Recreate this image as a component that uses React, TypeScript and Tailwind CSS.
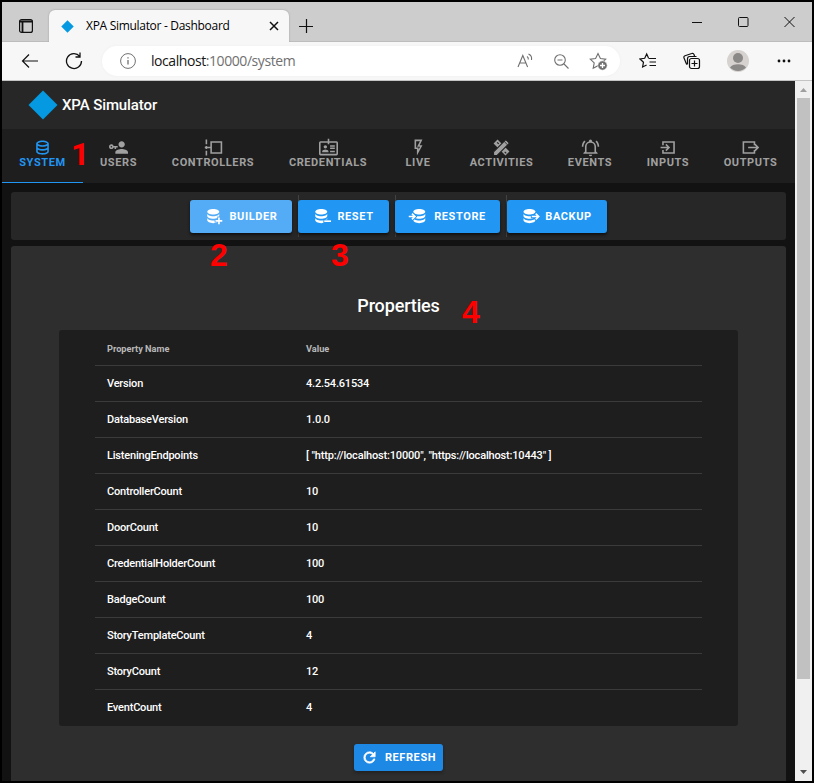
import type { ReactNode } from "react";

const Svg = ({ children, className = "" }: { children: ReactNode; className?: string }) => (
  <svg viewBox="0 0 24 24" fill="currentColor" className={"shrink-0 " + className}>
    {children}
  </svg>
);

const star = "M10 2.5l2.4 5 5.3.7-3.9 3.7 1 5.4-4.8-2.6-4.8 2.6 1-5.4-3.9-3.7 5.3-.7z";

const tabs: { label: string; width: string; icon: ReactNode }[] = [
  {
    label: "SYSTEM",
    width: "w-[81px]",
    icon: (
      <path d="M12 3C7.58 3 4 4.79 4 7V17C4 19.21 7.59 21 12 21S20 19.21 20 17V7C20 4.79 16.42 3 12 3M18 17C18 17.5 15.87 19 12 19S6 17.5 6 17V14.77C7.61 15.55 9.72 16 12 16S16.39 15.55 18 14.77V17M18 12.45C16.7 13.4 14.42 14 12 14C9.58 14 7.3 13.4 6 12.45V9.64C7.47 10.47 9.61 11 12 11C14.39 11 16.53 10.47 18 9.64V12.45M12 9C8.13 9 6 7.5 6 7S8.13 5 12 5C15.87 5 18 6.5 18 7S15.87 9 12 9Z" />
    ),
  },
  {
    label: "USERS",
    width: "w-[71px]",
    icon: (
      <path d="M11 10V12H9V14H7V12H5.8C5.4 13.2 4.3 14 3 14C1.3 14 0 12.7 0 11S1.3 8 3 8C4.3 8 5.4 8.8 5.8 10H11M3 10C2.4 10 2 10.4 2 11S2.4 12 3 12 4 11.6 4 11 3.6 10 3 10M16 14C18.7 14 24 15.3 24 18V20H8V18C8 15.3 13.3 14 16 14M16 12C13.8 12 12 10.2 12 8S13.8 4 16 4 20 5.8 20 8 18.2 12 16 12Z" />
    ),
  },
  {
    label: "CONTROLLERS",
    width: "w-[118px]",
    icon: <path d="M2 2h2v6H2zM2 10h2v1h4V4h15v16H8v-7H4v1H2v-1H1v-2h1zM2 16h2v6H2zM10 6v12h11V6z" />,
  },
  {
    label: "CREDENTIALS",
    width: "w-[112px]",
    icon: (
      <path d="M11 1h2v3h9a2 2 0 0 1 2 2v14a2 2 0 0 1-2 2H2a2 2 0 0 1-2-2V6a2 2 0 0 1 2-2h9zM2 6v14h20V6h-9v2h-2V6zM14 9h6v2h-6zM14 12h6v2h-6zM14 16h6v2h-6zM8 9a2.2 2.2 0 1 1 0 4.4A2.2 2.2 0 0 1 8 9M4 18v-1c0-1.5 2.7-2.4 4-2.4s4 .9 4 2.4v1z" />
    ),
  },
  {
    label: "LIVE",
    width: "w-[68px]",
    icon: <path d="M7 2H17L13.5 9H17L10 22V14H7V2M9 4V12H12V14.66L14 11H10.24L13.76 4H9Z" />,
  },
  {
    label: "ACTIVITIES",
    width: "w-[99px]",
    icon: (
      <>
        <path d="M2 7L7 2 22 17 17 22z" />
        <path d="M6.500 5.500l2 2M16 17.500l2 2" stroke="#1e1e1e" strokeWidth="1.500" />
        <path d="M2 22v-4.500L17.500 2l4.500 4.500L6.500 22z" stroke="#1e1e1e" strokeWidth="1.300" />
        <path d="M15.500 4.500l4 4" stroke="#1e1e1e" strokeWidth="1" />
      </>
    ),
  },
  {
    label: "EVENTS",
    width: "w-[78px]",
    icon: (
      <path d="M10,21H14A2,2 0 0,1 12,23A2,2 0 0,1 10,21M21,19V20H3V19L5,17V11C5,7.9 7.03,5.17 10,4.29C10,4.19 10,4.1 10,4A2,2 0 0,1 12,2A2,2 0 0,1 14,4C14,4.1 14,4.19 14,4.29C16.97,5.17 19,7.9 19,11V17L21,19M17,11A5,5 0 0,0 12,6A5,5 0 0,0 7,11V18H17V11M19.75,3.19L18.33,4.61C20.04,6.3 21,8.6 21,11H23C23,8.07 21.84,5.25 19.75,3.19M1,11H3C3,8.6 3.96,6.3 5.67,4.61L4.25,3.19C2.16,5.25 1,8.07 1,11Z" />
    ),
  },
  {
    label: "INPUTS",
    width: "w-[78px]",
    icon: <path d="M4 4h16v16H4v-5h2v3h12V6H6v3H4zM2 11h8.200L8 8.800l1.400-1.400L14 12l-4.600 4.600L8 15.200l2.200-2.200H2z" />,
  },
  {
    label: "OUTPUTS",
    width: "w-[87px]",
    icon: <path d="M2 4h16v5h-2V6H4v12h12v-3h2v5H2zM9 11h10.200L17 8.800l1.400-1.400L23 12l-4.600 4.600-1.400-1.400 2.200-2.200H9z" />,
  },
];

const Database = ({ x = 0 }: { x?: number }) => (
  <path
    transform={`translate(${x} 0)`}
    d="M11 2.500C6.600 2.500 3 4.200 3 6.200S6.600 9.900 11 9.900s8-1.700 8-3.700-3.600-3.700-8-3.700zM3 8.800c0 2 3.600 3.600 8 3.600s8-1.600 8-3.600v3.200c0 2-3.600 3.600-8 3.600S3 14 3 12zM3 14.300c0 2 3.600 3.600 8 3.600s8-1.600 8-3.600v3.500c0 2-3.600 3.700-8 3.700s-8-1.700-8-3.700z"
  />
);

// The overlay glyph carries an outline in its button's colour to cut it out of the discs.
const Overlay = ({ d, cut }: { d: string; cut: string }) => (
  <path d={d} stroke={cut} strokeWidth="2.400" paintOrder="stroke" />
);

const actions = [
  {
    label: "BUILDER",
    wrap: "ml-[179px]",
    cls: "w-[102px] gap-[6px] bg-[#55acf6] pl-px",
    icon: (
      <>
        <Database />
        <Overlay cut="#55acf6" d="M17.500 14h2.200v3.400H23v2.200h-3.300V23h-2.200v-3.400H14v-2.200h3.500z" />
      </>
    ),
  },
  {
    label: "RESET",
    wrap: "ml-[6px] border-l border-[#424242]",
    cls: "-ml-px w-[91px] gap-[6px] bg-[#2196f3]",
    icon: (
      <>
        <Database />
        <Overlay cut="#2196f3" d="M15 17.800h9v2.200h-9z" />
      </>
    ),
  },
  {
    label: "RESTORE",
    wrap: "ml-[6px] border-l border-[#424242]",
    cls: "-ml-px w-[105px] gap-[8px] bg-[#2196f3] pr-px",
    icon: (
      <>
        <Database x={4} />
        <Overlay cut="#2196f3" d="M1 11.500h5.500L4.500 9.500 6 8l4.800 4.600L6 17.200l-1.500-1.500 2-2H1z" />
      </>
    ),
  },
  {
    label: "BACKUP",
    wrap: "ml-[6px] border-l border-[#424242]",
    cls: "w-[100px] gap-[5px] bg-[#2196f3]",
    icon: (
      <>
        <Database x={-1} />
        <Overlay cut="#2196f3" d="M13 11.500h6.500L17.500 9.500 19 8l4.800 4.600L19 17.200l-1.500-1.500 2-2H13z" />
      </>
    ),
  },
];

const rows = [
  ["Version", "4.2.54.61534"],
  ["DatabaseVersion", "1.0.0"],
  ["ListeningEndpoints", '[ "http://localhost:10000", "https://localhost:10443" ]'],
  ["ControllerCount", "10"],
  ["DoorCount", "10"],
  ["CredentialHolderCount", "100"],
  ["BadgeCount", "100"],
  ["StoryTemplateCount", "4"],
  ["StoryCount", "12"],
  ["EventCount", "4"],
];

function TitleBar() {
  return (
    <div className="flex h-10 items-end border-b border-[#bdbdbd] bg-[#cdcdcd]">
      <div className="flex h-full w-[47px] items-center pl-[16px] pt-[8px]">
        <svg width="16" height="16" viewBox="0 0 16 16" fill="none" stroke="#111" strokeWidth="1.200">
          <rect x="1.600" y="1.600" width="12.800" height="12.800" rx="2" />
          <path d="M1.600 3.500h12.800M4.500 4v10" strokeWidth="1.800" />
        </svg>
      </div>
      <div className="-mb-px flex h-8 w-[240px] items-center rounded-t-md bg-[#f7f7f7] pl-[12px] shadow-[0_0_2px_#999]">
        <svg width="13" height="13" viewBox="0 0 14 14">
          <path d="M7 .3L13.700 7 7 13.700.3 7z" fill="#0499e0" />
        </svg>
        <span className="ml-[12px] w-[180px] whitespace-nowrap text-[12px] tracking-[-0.3px]">XPA Simulator - Dashboard</span>
        <svg width="10" height="10" viewBox="0 0 10 10" stroke="#111" strokeWidth="1.500" className="ml-[3px]">
          <path d="M1 1l8 8M9 1l-8 8" />
        </svg>
      </div>
      <svg width="14" height="14" viewBox="0 0 14 14" stroke="#111" strokeWidth="1.200" className="mb-[8px] ml-[10px]">
        <path d="M0 7.500h14M7.500 0v14" />
      </svg>
      <div className="mb-[13px] ml-auto mr-[17px] flex items-center gap-[35px]">
        <svg width="11" height="12" viewBox="0 0 11 12" stroke="#111">
          <path d="M0 6.500h10" />
        </svg>
        <svg width="11" height="12" viewBox="0 0 11 12" fill="none" stroke="#111">
          <rect x=".5" y="1.500" width="9.500" height="9" rx="1" />
        </svg>
        <svg width="11" height="12" viewBox="0 0 11 12" stroke="#111">
          <path d="M.5 1l10 10M10.500 1l-10 10" />
        </svg>
      </div>
    </div>
  );
}

function AddressBar() {
  return (
    <div className="flex h-[39px] items-center border-b border-[#c4c4c4] bg-[#f7f7f7] text-[#222]">
      <svg width="18" height="16" viewBox="0 0 18 16" fill="none" stroke="#111" strokeWidth="1.200" className="ml-[19px]">
        <path d="M17 8H1.500M8 1.500L1.500 8 8 14.500" />
      </svg>
      <svg width="18" height="18" viewBox="0 0 18 18" fill="none" stroke="#111" strokeWidth="1.300" className="ml-[26px]">
        <path d="M16.500 9A7.500 7.500 0 1 1 14.800 4.300M15 .5v4.500h-4.500" />
      </svg>
      <div className="ml-[19px] flex h-[30px] w-[518px] items-center rounded-full bg-white text-[#707070] shadow-[0_0_3px_#eee]">
        <svg width="16" height="16" viewBox="0 0 16 16" fill="none" stroke="currentColor" className="ml-[18px]">
          <circle cx="8" cy="8" r="7.400" />
          <path d="M8 7v4.500M8 4.300v1.300" strokeWidth="1.300" />
        </svg>
        <span className="ml-[15px] whitespace-nowrap text-[14px] leading-5 tracking-[-0.43px]">
          <span className="text-[#151515]">localhost</span>:10000/system
        </span>
        <div className="ml-auto mr-[12px] flex items-center gap-[19px]">
          <svg width="17" height="18" viewBox="0 0 17 18" fill="none" stroke="currentColor" strokeWidth="1.100">
            <path d="M1 15L5.800 3.500 10.600 15M2.600 11h6.400M10 4.500c1 .6 1.500 1.700 1.300 3M11.500 2c2.300 1 3.500 3.200 3 6" />
          </svg>
          <svg width="17" height="17" viewBox="0 0 17 17" fill="none" stroke="currentColor" strokeWidth="1.100">
            <circle cx="7" cy="7" r="5.300" />
            <path d="M4.500 7h5M11 11l4.500 4.500" />
          </svg>
          <svg width="19" height="19" viewBox="0 0 19 19" fill="none" stroke="currentColor" strokeWidth="1.100">
            <path d={star} transform="translate(-1 -1)" />
            <circle cx="13.500" cy="13.500" r="4.700" fill="currentColor" stroke="white" strokeWidth=".6" />
            <path d="M13.500 11v5M11 13.500h5" stroke="white" strokeWidth="1.300" />
          </svg>
        </div>
      </div>
      <svg width="18" height="18" viewBox="0 0 18 18" fill="none" stroke="#111" strokeWidth="1.200" className="ml-[19px]">
        <path d="M9.500 6L7.700 2 5.700 6.300 1 7l3.500 3.200L3.600 15l4-2M9.500 6.500H17M10.500 10H17M10.500 13.500H17" />
      </svg>
      <svg width="18" height="18" viewBox="0 0 18 18" fill="none" stroke="#111" strokeWidth="1.200" className="ml-[26px]">
        <rect x="6.500" y="6.500" width="10" height="10" rx="2" />
        <path d="M11.500 8.500v6M8.500 11.500h6M4.500 12.500l-1-.5-2.500-6c-.4-1 .1-2 1-2.300L8.700 1.500c1-.4 2 .1 2.400 1.300l.5 1.700M4.500 12V6.700c0-1.300.7-2.200 2-2.200h7" />
      </svg>
      <svg width="22" height="22" viewBox="0 0 22 22" className="ml-[26px]">
        <circle cx="11" cy="11" r="11" fill="#d5d2d0" />
        <circle cx="11" cy="8" r="5" fill="#8b8888" />
        <path d="M3 17.500c2-4.500 14-4.500 16 0a11 11 0 0 1-16 0z" fill="#8b8888" />
      </svg>
      <svg width="14" height="4" viewBox="0 0 14 4" fill="#111" className="ml-[28px]">
        <circle cx="2" cy="2" r="1.400" />
        <circle cx="7" cy="2" r="1.400" />
        <circle cx="12" cy="2" r="1.400" />
      </svg>
    </div>
  );
}

function Mark({ children, className }: { children: ReactNode; className: string }) {
  return <span className={"absolute text-[32px] leading-none text-[#ff0000] " + className}>{children}</span>;
}

export default function App() {
  return (
    <div className="relative flex h-[783px] w-[814px] flex-col overflow-hidden border-2 border-black bg-black font-['Open_Sans',sans-serif]">
      <TitleBar />
      <AddressBar />
      <div className="flex h-[700px] font-[Roboto,sans-serif]">
        <main className="flex w-[793px] flex-col overflow-hidden bg-[#121212] text-white">
          <header className="flex h-12 shrink-0 items-center bg-[#272727] pl-[26px]">
            <svg width="30" height="30" viewBox="0 0 30 30">
              <path d="M15 .5L29.500 15 15 29.500.5 15z" fill="#0499e0" />
            </svg>
            <h1 className="ml-[4px] text-[15px] font-medium tracking-[-0.1px]">XPA Simulator</h1>
          </header>
          <nav className="flex h-[54px] shrink-0 bg-[#1e1e1e]">
            {tabs.map((t, i) => (
              <div
                key={t.label}
                className={
                  "flex shrink-0 flex-col items-center pt-[9px] " +
                  t.width +
                  (i === 0 ? " border-b border-[#2196f3] text-[#2196f3]" : " text-[#a0a0a0]")
                }
              >
                <Svg className="size-[19px]">{t.icon}</Svg>
                <span className="-mt-px whitespace-nowrap text-[11px] font-bold leading-[13px] tracking-[0.6px]">{t.label}</span>
              </div>
            ))}
          </nav>
          <div className="ml-[9px] mt-[9px] flex h-12 w-[775px] shrink-0 items-center rounded-[3px] bg-[#272727]">
            {actions.map((a) => (
              <div key={a.label} className={"flex h-[42px] shrink-0 items-center " + a.wrap}>
                <button
                  className={"flex h-[33px] shrink-0 items-center justify-center rounded-[3px] shadow-[0_2px_3px_#111] " + a.cls}
                >
                  <Svg className="size-[18px]">{a.icon}</Svg>
                  <span className="pt-px text-[11px] font-bold leading-[16px] tracking-[0.6px]">{a.label}</span>
                </button>
              </div>
            ))}
          </div>
          <section className="ml-[9px] mt-[6px] flex h-[540px] w-[775px] shrink-0 flex-col items-center rounded-t-[3px] bg-[#2e2e2e]">
            <h2 className="mt-[48px] h-[36px] text-[18px] font-medium leading-[24px] tracking-[-0.15px]">Properties</h2>
            <div className="h-[396px] w-[679px] rounded-[3px] bg-[#1e1e1e] px-[36px]">
              <div className="flex h-9 items-center border-b border-[#3b3b3b] pl-[12px] pt-[3px] text-[9.200px] font-bold leading-[14px] text-[#b8b8b8]">
                <span className="w-[199px]">Property Name</span>
                <span>Value</span>
              </div>
              {rows.map(([name, value], i) => (
                <div
                  key={name}
                  className={
                    "flex h-9 items-center whitespace-nowrap pl-[12px] text-[11px] font-medium tracking-[-0.2px]" +
                    (i < 9 ? " border-b border-[#3b3b3b] pt-px" : "")
                  }
                >
                  <span className="w-[199px]">{name}</span>
                  <span className={i === 2 ? "tracking-[-0.17px]" : ""}>{value}</span>
                </div>
              ))}
            </div>
            <button className="mt-[18px] flex h-[27px] w-[89px] items-center justify-center gap-[7px] rounded-[3px] bg-[#1e88e5] shadow-[0_2px_3px_#222]">
              <Svg className="size-[17px] stroke-white">
                <path d="M17.65,6.35C16.2,4.9 14.21,4 12,4A8,8 0 0,0 4,12A8,8 0 0,0 12,20C15.73,20 18.84,17.45 19.73,14H17.65C16.83,16.33 14.61,18 12,18A6,6 0 0,1 6,12A6,6 0 0,1 12,6C13.66,6 15.14,6.69 16.22,7.78L13,11H20V4L17.65,6.35Z" />
              </Svg>
              <span className="pt-px text-[11px] font-bold leading-[16px] tracking-[0.6px]">REFRESH</span>
            </button>
          </section>
        </main>
        <aside className="flex w-[17px] flex-col items-center bg-[#f0f0f0]">
          <svg width="7" height="4" viewBox="0 0 7 4" className="mt-[7px]" fill="#a0a0a0">
            <path d="M0 4L3.500 0 7 4z" />
          </svg>
          <div className="mt-[6px] h-[581px] w-[13px] bg-[#c1c1c1]" />
          <svg width="7" height="4" viewBox="0 0 7 4" className="mb-[7px] mt-auto" fill="#505050">
            <path d="M0 0h7L3.500 4z" />
          </svg>
        </aside>
      </div>
      <Mark className="left-[69px] top-[136px] font-[Roboto,sans-serif] font-bold">1</Mark>
      <Mark className="left-[208px] top-[237px] font-[Arial,sans-serif] font-bold">2</Mark>
      <Mark className="left-[329px] top-[237px] font-[Arial,sans-serif] font-bold">3</Mark>
      <Mark className="left-[460px] top-[294px] font-[Arial,sans-serif] font-bold">4</Mark>
    </div>
  );
}
